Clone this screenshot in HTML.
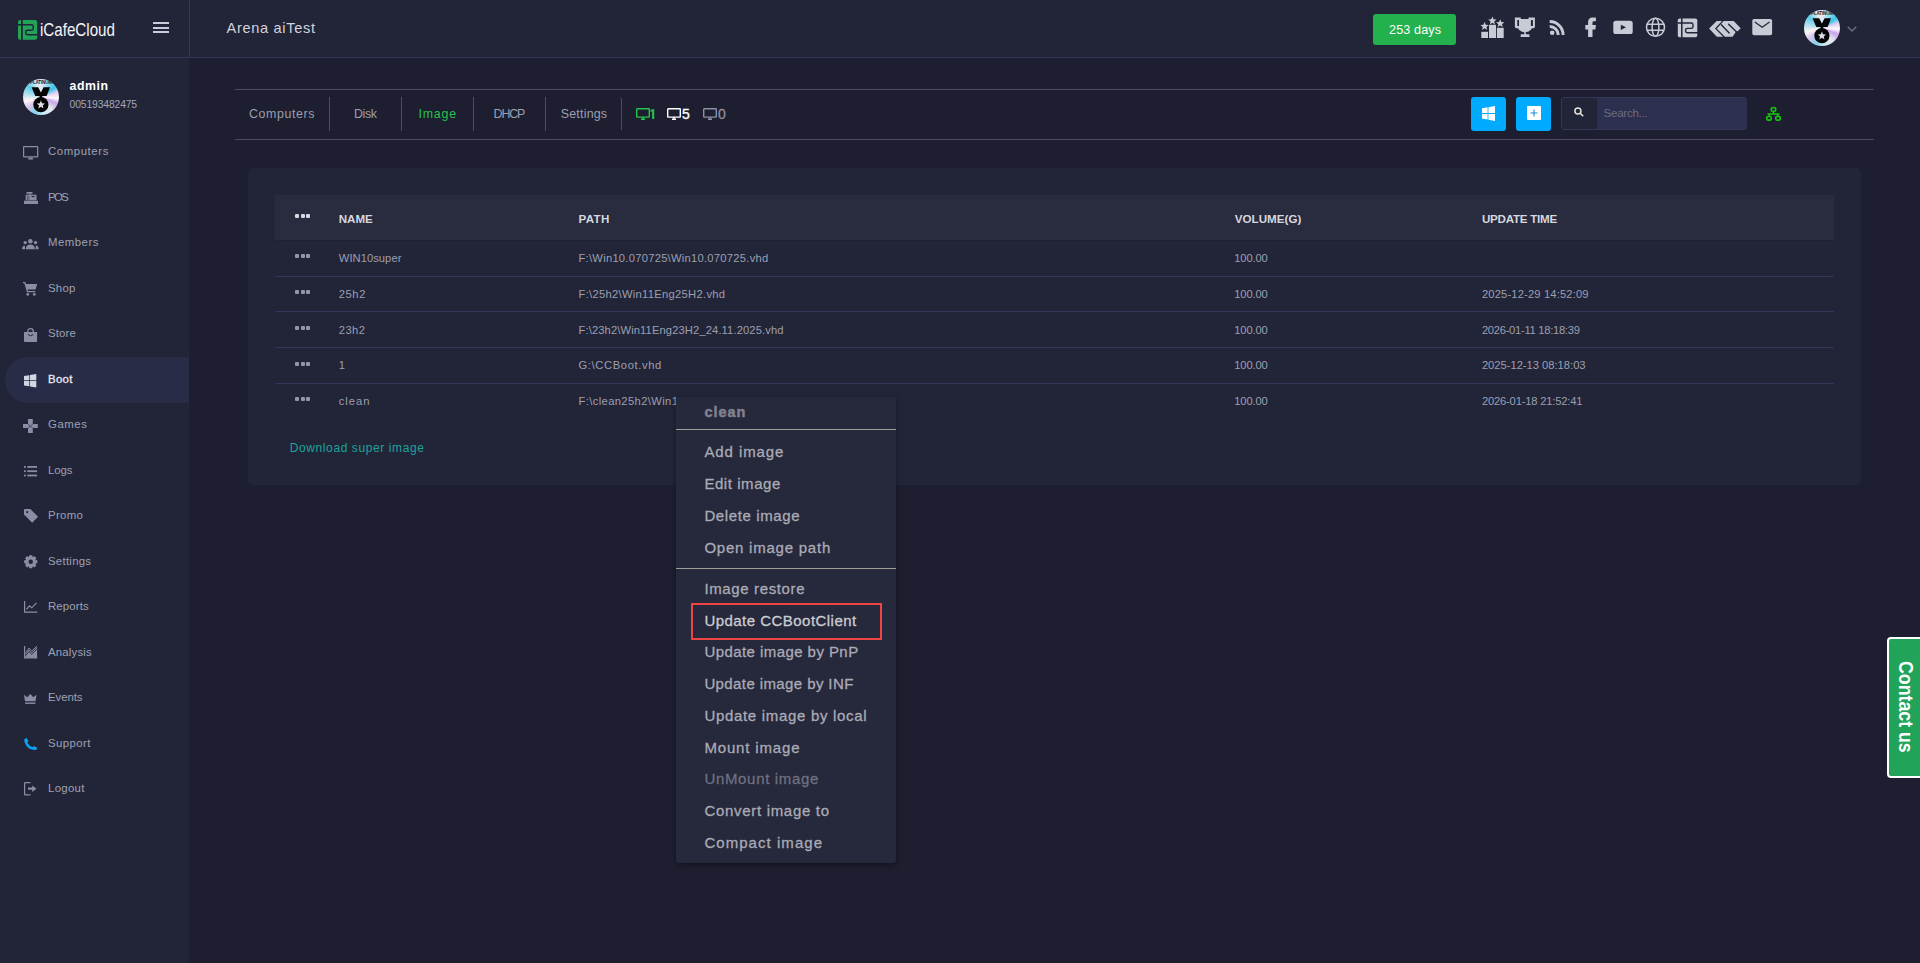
<!DOCTYPE html>
<html><head><meta charset="utf-8">
<style>
html,body{margin:0;padding:0;}
body{width:1920px;height:963px;overflow:hidden;background:#1d1e2f;font-family:"Liberation Sans",sans-serif;position:relative;}
.a{position:absolute;}
.t{position:absolute;white-space:nowrap;line-height:1;}
svg{position:absolute;overflow:visible;}
</style></head><body>
<!-- header -->
<div class="a" style="left:0;top:0;width:1920px;height:57px;background:#222538"></div>
<div class="a" style="left:0;top:57px;width:1920px;height:1px;background:#323459"></div>
<div class="a" style="left:189px;top:0;width:1px;height:57px;background:#323459"></div>
<!-- sidebar -->
<div class="a" style="left:0;top:58px;width:189px;height:905px;background:#222538"></div>
<div class="a" style="left:5px;top:357px;width:184px;height:46px;background:#292c47;border-radius:23px 0 0 23px"></div>

<!-- logo -->
<svg style="left:18px;top:20px" width="19" height="20" viewBox="0 0 19 20">
  <rect x="0" y="0" width="19.2" height="19.8" rx="2.2" fill="#21a358"/>
  <path d="M3.9 0V20" stroke="#222538" stroke-width="1.8"/>
  <path d="M0 4.7H13.6Q15.3 4.7 15.3 6.4V8.6Q15.3 10.3 13.6 10.3H9.4Q7.7 10.3 7.7 12V13.1Q7.7 14.8 9.4 14.8H19.5" stroke="#222538" stroke-width="1.5" fill="none"/>
</svg>
<!-- hamburger -->
<div class="a" style="left:153px;top:22px;width:16px;height:2px;background:#c9cbd6"></div>
<div class="a" style="left:153px;top:26.5px;width:16px;height:2px;background:#c9cbd6"></div>
<div class="a" style="left:153px;top:31px;width:16px;height:2px;background:#c9cbd6"></div>

<!-- days button -->
<div class="a" style="left:1373px;top:14px;width:83px;height:31px;background:#22b14c;border-radius:3px"></div>

<!-- header icons -->
<svg style="left:0;top:0" width="1920" height="57" viewBox="0 0 1920 57">
 <g fill="#c8cad6">
  <rect x="1481.3" y="31.8" width="6.7" height="6.2"/><rect x="1489" y="24.8" width="7" height="13.2"/><rect x="1496.9" y="27.8" width="6.8" height="10.2"/>
  <path d="M1484.60 22.10 L1485.74 24.83 L1488.69 25.07 L1486.44 27.00 L1487.13 29.88 L1484.60 28.33 L1482.07 29.88 L1482.76 27.00 L1480.51 25.07 L1483.46 24.83Z"/><path d="M1492.40 16.60 L1493.54 19.33 L1496.49 19.57 L1494.24 21.50 L1494.93 24.38 L1492.40 22.83 L1489.87 24.38 L1490.56 21.50 L1488.31 19.57 L1491.26 19.33Z"/><path d="M1500.20 19.30 L1501.34 22.03 L1504.29 22.27 L1502.04 24.20 L1502.73 27.08 L1500.20 25.54 L1497.67 27.08 L1498.36 24.20 L1496.11 22.27 L1499.06 22.03Z"/>
  <path d="M1514.9 17.6H1520.8V19H1528.5V17.6H1534.9V26.8Q1534.9 28.2 1533.5 28.2H1532Q1530.6 30.8 1528.2 31.8L1525.8 32.1V34.3H1529.3L1529.5 37.1H1520.6L1520.8 34.3H1524.2V32.1L1521.8 31.8Q1519.4 30.8 1518 28.2H1516.3Q1514.9 28.2 1514.9 26.8ZM1517.3 20V26H1519V20ZM1530.9 20V26H1532.9V20Z"/>
  <circle cx="1552.2" cy="32.8" r="2.3"/>
  <path d="M1549.7 20.1A14.9 14.9 0 0 1 1564.6 35H1561.6A11.9 11.9 0 0 0 1549.7 23.1Z"/>
  <path d="M1549.7 25A10 10 0 0 1 1559.7 35H1556.8A7.1 7.1 0 0 0 1549.7 27.9Z"/>
  <path d="M1588.1 37V29.6H1585.3V24.9H1588.1V22Q1588.1 17.5 1592.6 17.5H1595.9V21.3H1593.6Q1592.5 21.3 1592.5 22.4V24.9H1595.9L1595.4 29.6H1592.5V37Z"/>
  <rect x="1613.3" y="20.7" width="19.4" height="13.3" rx="2.6"/>
  <path d="M1620.8 24.8V29.9L1626 27.35Z" fill="#222538"/>
 </g>
 <g fill="none" stroke="#c8cad6" stroke-width="1.5">
  <circle cx="1655.5" cy="27.35" r="9"/>
  <ellipse cx="1655.5" cy="27.35" rx="3.4" ry="9"/>
  <path d="M1647 24.3H1664M1647 30.3H1664"/>
 </g>
 <g>
  <rect x="1677.8" y="18.5" width="19.5" height="18.8" rx="1.8" fill="#c8cad6"/>
  <path d="M1681.8 18V38" stroke="#222538" stroke-width="1.5"/>
  <path d="M1677.5 23H1691.3Q1693 23 1693 24.7V26.8Q1693 28.4 1691.3 28.4H1687.3Q1685.6 28.4 1685.6 30.1V31Q1685.6 32.7 1687.3 32.7H1698" stroke="#222538" stroke-width="1.4" fill="none"/>
 </g>
 <g transform="translate(1705 16)">
  <path d="M4.1 12.6L11.7 5H28.7L35.7 12.3L32.6 15.3H31.2L27.6 20.8H11.8Z" fill="#c8cad6"/>
  <path d="M18.2 4.6L10.9 12.6L19.4 21.2" stroke="#222538" stroke-width="1.3" fill="none"/>
  <path d="M16.3 8.7L24.2 16.9" stroke="#222538" stroke-width="1.4" stroke-linecap="round" fill="none"/>
  <path d="M23.6 8.2L31.6 16" stroke="#222538" stroke-width="1.4" stroke-linecap="round" fill="none"/>
 </g>
 <rect x="1752.3" y="19" width="19.8" height="16.2" rx="1.8" fill="#c8cad6"/>
 <path d="M1754.8 22.1L1762.2 27.2L1769.6 22.1" stroke="#222538" stroke-width="1.2" fill="none"/>
</svg>
<!-- avatar header -->
<div class="a" style="left:1804.3px;top:9.9px;width:36px;height:36px;border-radius:50%;overflow:hidden;background:conic-gradient(from 0deg,#e8eaf2 0deg,#8fdcf0 30deg,#35c5ea 55deg,#e7d3f0 75deg,#fdf8ff 95deg,#c7a4ea 112deg,#e5e9f0 140deg,#cfe9f3 170deg,#7fd6ee 200deg,#d8c4ec 230deg,#fff6f4 255deg,#b7e2ee 280deg,#5fcde9 310deg,#dfe8f0 340deg,#e8eaf2 360deg)">
  <svg style="left:0;top:0" width="36" height="36" viewBox="0 0 36 36">
    <text x="18" y="5.2" font-size="4.6" font-weight="700" text-anchor="middle" fill="#1a1a1a" font-family="Liberation Sans" letter-spacing="-0.2">PLATINUM</text>
    <path d="M8.6 8.2H15.2L17.9 13.6L20.6 8.2H27.1L23.6 17H12.3Z" fill="#050505"/>
    <rect x="16.6" y="16.5" width="2.6" height="2.5" fill="#050505"/>
    <circle cx="17.9" cy="25.7" r="7.6" fill="#050505"/>
    <path d="M17.90 21.60 L19.04 24.33 L21.99 24.57 L19.74 26.50 L20.43 29.38 L17.90 27.83 L15.37 29.38 L16.06 26.50 L13.81 24.57 L16.76 24.33Z" fill="#dcdde6"/>
  </svg>
</div>
<svg style="left:1847px;top:25.5px" width="10" height="6" viewBox="0 0 10 6"><path d="M0.7 0.7L5 5L9.3 0.7" stroke="#6e7086" stroke-width="1.3" fill="none"/></svg>

<!-- sidebar avatar -->
<div class="a" style="left:23px;top:79px;width:36px;height:36px;border-radius:50%;overflow:hidden;background:conic-gradient(from 0deg,#e8eaf2 0deg,#8fdcf0 30deg,#35c5ea 55deg,#e7d3f0 75deg,#fdf8ff 95deg,#c7a4ea 112deg,#e5e9f0 140deg,#cfe9f3 170deg,#7fd6ee 200deg,#d8c4ec 230deg,#fff6f4 255deg,#b7e2ee 280deg,#5fcde9 310deg,#dfe8f0 340deg,#e8eaf2 360deg)">
  <svg style="left:0;top:0" width="36" height="36" viewBox="0 0 36 36">
    <text x="18" y="5.2" font-size="4.6" font-weight="700" text-anchor="middle" fill="#1a1a1a" font-family="Liberation Sans" letter-spacing="-0.2">PLATINUM</text>
    <path d="M8.6 8.2H15.2L17.9 13.6L20.6 8.2H27.1L23.6 17H12.3Z" fill="#050505"/>
    <rect x="16.6" y="16.5" width="2.6" height="2.5" fill="#050505"/>
    <circle cx="17.9" cy="25.7" r="7.6" fill="#050505"/>
    <path d="M17.90 21.60 L19.04 24.33 L21.99 24.57 L19.74 26.50 L20.43 29.38 L17.90 27.83 L15.37 29.38 L16.06 26.50 L13.81 24.57 L16.76 24.33Z" fill="#dcdde6"/>
  </svg>
</div>

<!-- sidebar icons -->
<g></g>
<svg style="left:22.9px;top:146.2px" width="15.300000000000004" height="13.400000000000006" viewBox="0 0 15.3 13.4" preserveAspectRatio="none" ><rect x="0.6" y="0.6" width="14.1" height="10.3" rx="0.5" fill="none" stroke="#8a8ea4" stroke-width="1.2"/><path d="M4.8 13.4H10.5L9.2 11.5H6.1Z" fill="#8a8ea4"/></svg>
<svg style="left:23.5px;top:192px" width="14.0" height="12" viewBox="0 0 14 12" preserveAspectRatio="none" ><rect x="2.5" y="0" width="6" height="1.7" fill="#8a8ea4"/><rect x="5.2" y="1.7" width="1.5" height="1.1" fill="#8a8ea4"/><rect x="1.7" y="2.7" width="10.8" height="5.6" fill="#8a8ea4"/><rect x="3" y="3.8" width="0.7" height="4.2" fill="#222538" opacity="0.7"/><rect x="4.6" y="3.8" width="0.7" height="4.2" fill="#222538" opacity="0.7"/><rect x="7.6" y="4" width="3" height="1.1" fill="#222538"/><rect x="0" y="8.7" width="14" height="3.3" fill="#8a8ea4"/></svg>
<svg style="left:22.2px;top:239.4px" width="16.7" height="10.199999999999989" viewBox="0 0 16.7 10.2" preserveAspectRatio="none" ><circle cx="8.35" cy="2.3" r="2.3" fill="#8a8ea4"/><path d="M3.8 10.2Q3.8 5.5 8.35 5.5Q12.9 5.5 12.9 10.2Z" fill="#8a8ea4"/><circle cx="3.2" cy="3.6" r="1.7" fill="#8a8ea4"/><circle cx="13.5" cy="3.6" r="1.7" fill="#8a8ea4"/><path d="M0 10.2Q0 6.5 2.8 6.4L3.2 10.2Z" fill="#8a8ea4"/><path d="M16.7 10.2Q16.7 6.5 13.9 6.4L13.5 10.2Z" fill="#8a8ea4"/></svg>
<svg style="left:22.9px;top:282px" width="14.200000000000003" height="13.800000000000011" viewBox="0 0 14.2 13.8" preserveAspectRatio="none" ><path d="M0 0.6H1.8L4.5 9.6H12.3" fill="none" stroke="#8a8ea4" stroke-width="1.3"/><path d="M2.3 2H14.2L12.6 7.6H4Z" fill="#8a8ea4"/><circle cx="4.8" cy="12.3" r="1.4" fill="#8a8ea4"/><circle cx="11.3" cy="12.3" r="1.4" fill="#8a8ea4"/></svg>
<svg style="left:24px;top:327.5px" width="13.100000000000001" height="14.100000000000023" viewBox="0 0 13.1 14.1" preserveAspectRatio="none" ><path d="M0 4H13.1V13Q13.1 14.1 12 14.1H1.1Q0 14.1 0 13Z" fill="#8a8ea4"/><path d="M3.8 5.5V3.3Q3.8 0.7 6.55 0.7Q9.3 0.7 9.3 3.3V5.5" fill="none" stroke="#8a8ea4" stroke-width="1.3"/><path d="M3.8 6.5Q6.55 9 9.3 6.5" fill="none" stroke="#222538" stroke-width="1"/></svg>
<svg style="left:24px;top:373.5px" width="12.299999999999997" height="13.5" viewBox="0 0 12.3 13.5" preserveAspectRatio="none" ><path d="M0 2.1L5.3 1.2V6.3H0ZM6 1.1L12.3 0V6.3H6ZM0 7.1H5.3V12.3L0 11.4ZM6 7.1H12.3V13.5L6 12.4Z" fill="#d2d5e2"/></svg>
<svg style="left:23.2px;top:418.9px" width="14.8" height="14.100000000000023" viewBox="0 0 14.8 14.1" preserveAspectRatio="none" ><path d="M5 0H9.8V4.6L7.4 6.9L5 4.6Z" fill="#8a8ea4"/><path d="M5 14.1H9.8V9.5L7.4 7.2L5 9.5Z" fill="#8a8ea4"/><path d="M0 5.1V9.1H4.9L6.9 7.1L4.9 5.1Z" fill="#8a8ea4"/><path d="M14.8 5.1V9.1H9.9L7.9 7.1L9.9 5.1Z" fill="#8a8ea4"/></svg>
<svg style="left:24px;top:465.7px" width="13.100000000000001" height="10.400000000000034" viewBox="0 0 13.1 10.4" preserveAspectRatio="none" ><rect x="0" y="0" width="1.8" height="1.8" fill="#8a8ea4"/><rect x="3.3" y="0" width="9.8" height="1.8" fill="#8a8ea4"/><rect x="0" y="4.3" width="1.8" height="1.8" fill="#8a8ea4"/><rect x="3.3" y="4.3" width="9.8" height="1.8" fill="#8a8ea4"/><rect x="0" y="8.6" width="1.8" height="1.8" fill="#8a8ea4"/><rect x="3.3" y="8.6" width="9.8" height="1.8" fill="#8a8ea4"/></svg>
<svg style="left:23.5px;top:509.1px" width="14.100000000000001" height="13.699999999999932" viewBox="0 0 14.1 13.7" preserveAspectRatio="none" ><path d="M0 1Q0 0 1 0H6.3L14.1 7.8L8.2 13.7L0 5.6Z" fill="#8a8ea4"/><circle cx="3.2" cy="3.1" r="1.1" fill="#222538"/></svg>
<svg style="left:23.8px;top:555.1px" width="13.499999999999996" height="13.5" viewBox="0 0 13.5 13.5" preserveAspectRatio="none" ><path d="M5.23 0.17 L8.27 0.17 L8.59 2.21 L8.66 2.24 L10.33 1.03 L12.47 3.17 L11.26 4.84 L11.29 4.91 L13.33 5.23 L13.33 8.27 L11.29 8.59 L11.26 8.66 L12.47 10.33 L10.33 12.47 L8.66 11.26 L8.59 11.29 L8.27 13.33 L5.23 13.33 L4.91 11.29 L4.84 11.26 L3.17 12.47 L1.03 10.33 L2.24 8.66 L2.21 8.59 L0.17 8.27 L0.17 5.23 L2.21 4.91 L2.24 4.84 L1.03 3.17 L3.17 1.03 L4.84 2.24 L4.91 2.21Z" fill="#8a8ea4"/><circle cx="6.75" cy="6.75" r="4.9" fill="#8a8ea4"/><circle cx="6.75" cy="6.75" r="2.2" fill="#222538"/></svg>
<svg style="left:23.8px;top:601.3px" width="13.3" height="11.700000000000045" viewBox="0 0 13.3 11.7" preserveAspectRatio="none" ><path d="M0.6 0V11.1H13.3" fill="none" stroke="#8a8ea4" stroke-width="1.2"/><path d="M2.5 8.5L5.5 4.8L7.8 6.8L12.5 1.8" fill="none" stroke="#8a8ea4" stroke-width="1.2"/></svg>
<svg style="left:23.8px;top:646.2px" width="13.3" height="12.399999999999977" viewBox="0 0 13.3 12.4" preserveAspectRatio="none" ><path d="M0.6 0V11.8H13.3" fill="none" stroke="#8a8ea4" stroke-width="1.2"/><path d="M1.5 11.8V8L5 3.5L7.8 6.5L13.1 1V11.8Z" fill="#8a8ea4"/><path d="M1.8 6.8L5 2L7.8 5L13.1 0" fill="none" stroke="#8a8ea4" stroke-width="1"/><path d="M1.5 9.8L5 5.5L7.8 8.3L13.1 3" fill="none" stroke="#222538" stroke-width="0.9"/></svg>
<svg style="left:24.1px;top:693.5px" width="12.5" height="9.899999999999977" viewBox="0 0 12.5 9.9" preserveAspectRatio="none" ><path d="M0 0.8L3.2 3.3L6.25 0L9.3 3.3L12.5 0.8L11.5 7.2H1Z" fill="#8a8ea4"/><rect x="1" y="8.5" width="10.5" height="1.4" fill="#8a8ea4"/></svg>
<svg style="left:23.7px;top:737.9px" width="13.2" height="12.100000000000023" viewBox="0 0 13.2 12.1" preserveAspectRatio="none" ><path d="M0.3 1.2L2.6 0L4.5 3.3L3.2 4.5Q5.2 8.3 8.7 9.3L9.9 8L13.2 9.8L12 12.1Q5.5 12.1 2.2 7.5Q0 4.5 0.3 1.2Z" fill="#0aa5f5"/></svg>
<svg style="left:24.1px;top:782.2px" width="12.5" height="13.399999999999977" viewBox="0 0 12.5 13.4" preserveAspectRatio="none" ><path d="M6.5 0.6H1.2Q0.6 0.6 0.6 1.2V12.2Q0.6 12.8 1.2 12.8H6.5" fill="none" stroke="#8a8ea4" stroke-width="1.2"/><path d="M4 5.6H8.2V3.5L12.5 6.7L8.2 9.9V7.8H4Z" fill="#8a8ea4"/></svg>

<!-- tab bar -->
<div class="a" style="left:235px;top:89px;width:1639px;height:1px;background:#4a4b5e"></div>
<div class="a" style="left:235px;top:139px;width:1639px;height:1px;background:#4a4b5e"></div>
<div class="a" style="left:329px;top:97px;width:1px;height:34px;background:#4a4b5e"></div>
<div class="a" style="left:401px;top:97px;width:1px;height:34px;background:#4a4b5e"></div>
<div class="a" style="left:473px;top:97px;width:1px;height:34px;background:#4a4b5e"></div>
<div class="a" style="left:545px;top:97px;width:1px;height:34px;background:#4a4b5e"></div>
<div class="a" style="left:612px;top:97px;width:10px;height:33px;border-right:1px solid #4a4b5e;border-top-right-radius:3px;box-sizing:border-box"></div>
<!-- monitors -->
<svg style="left:636px;top:108px" width="14" height="12" viewBox="0 0 14 12" fill="none" stroke="#27c24c" stroke-width="1.4"><rect x="0.7" y="0.7" width="12.6" height="8.4" rx="0.6"/><path d="M5 11.3H9M7 9V11.3" /></svg>
<svg style="left:667px;top:108px" width="14" height="12" viewBox="0 0 14 12" fill="none" stroke="#ffffff" stroke-width="1.4"><rect x="0.7" y="0.7" width="12.6" height="8.4" rx="0.6"/><path d="M5 11.3H9M7 9V11.3" /></svg>
<svg style="left:703px;top:108px" width="14" height="12" viewBox="0 0 14 12" fill="none" stroke="#8e90a2" stroke-width="1.4"><rect x="0.7" y="0.7" width="12.6" height="8.4" rx="0.6"/><path d="M5 11.3H9M7 9V11.3" /></svg>

<!-- buttons -->
<div class="a" style="left:1471px;top:97px;width:35px;height:34px;background:#00aaff;border-radius:3px"></div>
<svg style="left:1482px;top:106px" width="13" height="15" viewBox="0 0 13 15" fill="#fff"><path d="M0 2.3L5.6 1.3V7H0ZM6.4 1.2L13 0V7H6.4ZM0 7.9H5.6V13.6L0 12.6ZM6.4 7.9H13V15L6.4 13.8Z"/></svg>
<div class="a" style="left:1516px;top:97px;width:35px;height:34px;background:#00aaff;border-radius:3px"></div>
<svg style="left:1527px;top:106px" width="14" height="14" viewBox="0 0 14 14"><rect x="0" y="0" width="14" height="14" rx="1" fill="#fff"/><path d="M7 3.5V10.5M3.5 7H10.5" stroke="#1a8fd8" stroke-width="1.1"/></svg>
<!-- search -->
<div class="a" style="left:1561px;top:97px;width:186px;height:33px;background:#222437;border:1px solid #34365a;border-radius:3px;box-sizing:border-box"></div>
<div class="a" style="left:1597px;top:98px;width:149px;height:31px;background:#2d2f4f;border-left:1px solid #2c2e4a"></div>
<svg style="left:1574px;top:107px" width="10" height="10" viewBox="0 0 10 10" fill="none" stroke="#e6e3d8" stroke-width="1.5"><circle cx="3.9" cy="3.9" r="3"/><path d="M6.1 6.1L9.2 9.2"/></svg>
<!-- network -->
<svg style="left:1766px;top:107px" width="15" height="14" viewBox="0 0 15 14" fill="none" stroke="#16c60c" stroke-width="1.6"><rect x="5.3" y="0.8" width="4.4" height="3.4" rx="1"/><path d="M7.5 4.2V7M1.5 7H13.5M3.3 7V9.3M11.7 7V9.3"/><rect x="0.8" y="9.5" width="4.4" height="3.6" rx="1"/><rect x="9.8" y="9.5" width="4.4" height="3.6" rx="1"/></svg>

<!-- card -->
<div class="a" style="left:248px;top:168px;width:1613px;height:317px;background:#222538;border-radius:5px"></div>
<div class="a" style="left:275px;top:195px;width:1559px;height:45px;background:#292b3f"></div>
<div class="a" style="left:275px;top:240px;width:1559px;height:1px;background:#1f2032"></div>
<div class="a" style="left:275px;top:276px;width:1559px;height:1px;background:#32345a"></div>
<div class="a" style="left:275px;top:311px;width:1559px;height:1px;background:#32345a"></div>
<div class="a" style="left:275px;top:347px;width:1559px;height:1px;background:#32345a"></div>
<div class="a" style="left:275px;top:383px;width:1559px;height:1px;background:#32345a"></div>
<div class="a" style="left:295.0px;top:254.3px;width:4px;height:4px;background:#9496a8;border-radius:1px"></div>
<div class="a" style="left:300.5px;top:254.3px;width:4px;height:4px;background:#9496a8;border-radius:1px"></div>
<div class="a" style="left:306.0px;top:254.3px;width:4px;height:4px;background:#9496a8;border-radius:1px"></div>
<div class="a" style="left:295.0px;top:290.1px;width:4px;height:4px;background:#9496a8;border-radius:1px"></div>
<div class="a" style="left:300.5px;top:290.1px;width:4px;height:4px;background:#9496a8;border-radius:1px"></div>
<div class="a" style="left:306.0px;top:290.1px;width:4px;height:4px;background:#9496a8;border-radius:1px"></div>
<div class="a" style="left:295.0px;top:325.8px;width:4px;height:4px;background:#9496a8;border-radius:1px"></div>
<div class="a" style="left:300.5px;top:325.8px;width:4px;height:4px;background:#9496a8;border-radius:1px"></div>
<div class="a" style="left:306.0px;top:325.8px;width:4px;height:4px;background:#9496a8;border-radius:1px"></div>
<div class="a" style="left:295.0px;top:361.6px;width:4px;height:4px;background:#9496a8;border-radius:1px"></div>
<div class="a" style="left:300.5px;top:361.6px;width:4px;height:4px;background:#9496a8;border-radius:1px"></div>
<div class="a" style="left:306.0px;top:361.6px;width:4px;height:4px;background:#9496a8;border-radius:1px"></div>
<div class="a" style="left:295.0px;top:397.3px;width:4px;height:4px;background:#9496a8;border-radius:1px"></div>
<div class="a" style="left:300.5px;top:397.3px;width:4px;height:4px;background:#9496a8;border-radius:1px"></div>
<div class="a" style="left:306.0px;top:397.3px;width:4px;height:4px;background:#9496a8;border-radius:1px"></div>
<div class="a" style="left:295.0px;top:214px;width:4px;height:4px;background:#d6d7df;border-radius:1px"></div>
<div class="a" style="left:300.5px;top:214px;width:4px;height:4px;background:#d6d7df;border-radius:1px"></div>
<div class="a" style="left:306.0px;top:214px;width:4px;height:4px;background:#d6d7df;border-radius:1px"></div>

<div class="t" style="left:226.60px;top:20.74px;font-size:14.6px;color:#d2d3dc;font-weight:400;letter-spacing:0.664px;">Arena aiTest</div>
<div class="t" style="left:1389.00px;top:23.83px;font-size:12.6px;color:#ffffff;font-weight:400;letter-spacing:0.129px;">253 days</div>
<div class="t" style="left:40px;top:21.19px;font-size:18.2px;color:#f4f4f6;transform:scaleX(0.833);transform-origin:0 0">iCafeCloud</div>
<div class="t" style="left:69.60px;top:80.39px;font-size:12.3px;color:#ffffff;font-weight:700;letter-spacing:0.575px;">admin</div>
<div class="t" style="left:69.60px;top:100.20px;font-size:10.4px;color:#a3a5b7;font-weight:400;letter-spacing:-0.164px;">005193482475</div>
<div class="t" style="left:48.00px;top:146.25px;font-size:11.4px;color:#9ea1b3;font-weight:400;letter-spacing:0.581px;">Computers</div>
<div class="t" style="left:48.00px;top:191.75px;font-size:11.4px;color:#9ea1b3;font-weight:400;letter-spacing:-1.569px;">POS</div>
<div class="t" style="left:48.00px;top:237.25px;font-size:11.4px;color:#9ea1b3;font-weight:400;letter-spacing:0.485px;">Members</div>
<div class="t" style="left:48.00px;top:282.75px;font-size:11.4px;color:#9ea1b3;font-weight:400;letter-spacing:0.233px;">Shop</div>
<div class="t" style="left:48.00px;top:328.25px;font-size:11.4px;color:#9ea1b3;font-weight:400;letter-spacing:0.122px;">Store</div>
<div class="t" style="left:48.00px;top:373.75px;font-size:11.4px;color:#e9eaf0;font-weight:400;letter-spacing:0.324px;-webkit-text-stroke:0.3px #e9eaf0;">Boot</div>
<div class="t" style="left:48.00px;top:419.25px;font-size:11.4px;color:#9ea1b3;font-weight:400;letter-spacing:0.551px;">Games</div>
<div class="t" style="left:48.00px;top:464.75px;font-size:11.4px;color:#9ea1b3;font-weight:400;letter-spacing:-0.108px;">Logs</div>
<div class="t" style="left:48.00px;top:510.25px;font-size:11.4px;color:#9ea1b3;font-weight:400;letter-spacing:0.351px;">Promo</div>
<div class="t" style="left:48.00px;top:555.75px;font-size:11.4px;color:#9ea1b3;font-weight:400;letter-spacing:0.271px;">Settings</div>
<div class="t" style="left:48.00px;top:601.25px;font-size:11.4px;color:#9ea1b3;font-weight:400;letter-spacing:0.142px;">Reports</div>
<div class="t" style="left:48.00px;top:646.75px;font-size:11.4px;color:#9ea1b3;font-weight:400;letter-spacing:0.196px;">Analysis</div>
<div class="t" style="left:48.00px;top:692.25px;font-size:11.4px;color:#9ea1b3;font-weight:400;letter-spacing:-0.077px;">Events</div>
<div class="t" style="left:48.00px;top:737.75px;font-size:11.4px;color:#9ea1b3;font-weight:400;letter-spacing:0.419px;">Support</div>
<div class="t" style="left:48.00px;top:783.25px;font-size:11.4px;color:#9ea1b3;font-weight:400;letter-spacing:0.294px;">Logout</div>
<div class="t" style="left:248.90px;top:107.70px;font-size:12.4px;color:#9c9eaf;font-weight:400;letter-spacing:0.612px;">Computers</div>
<div class="t" style="left:354.00px;top:107.70px;font-size:12.4px;color:#9c9eaf;font-weight:400;letter-spacing:-0.367px;">Disk</div>
<div class="t" style="left:418.50px;top:107.70px;font-size:12.4px;color:#27c24c;font-weight:400;letter-spacing:0.800px;">Image</div>
<div class="t" style="left:493.60px;top:107.70px;font-size:12.4px;color:#9c9eaf;font-weight:400;letter-spacing:-1.133px;">DHCP</div>
<div class="t" style="left:560.70px;top:107.70px;font-size:12.4px;color:#9c9eaf;font-weight:400;letter-spacing:0.229px;">Settings</div>
<svg style="left:0;top:0" width="1" height="1"><path d="M652.1 109.2H654.2V119H652.1V111.2L650.5 112V110.3Z" fill="#27c24c"/></svg>
<div class="t" style="left:682.10px;top:107.25px;font-size:14px;color:#ffffff;font-weight:400;letter-spacing:0.000px;-webkit-text-stroke:0.35px #fff;">5</div>
<div class="t" style="left:718.00px;top:107.25px;font-size:14px;color:#8e90a2;font-weight:400;letter-spacing:0.000px;-webkit-text-stroke:0.3px #8e90a2;">0</div>
<div class="t" style="left:1603.60px;top:106.88px;font-size:11.6px;color:#6b6c7f;font-weight:400;letter-spacing:-0.300px;">Search...</div>
<div class="t" style="left:338.80px;top:213.38px;font-size:11.6px;color:#d6d7df;font-weight:700;letter-spacing:-0.067px;">NAME</div>
<div class="t" style="left:578.50px;top:213.38px;font-size:11.6px;color:#d6d7df;font-weight:700;letter-spacing:0.367px;">PATH</div>
<div class="t" style="left:1234.70px;top:213.38px;font-size:11.6px;color:#d6d7df;font-weight:700;letter-spacing:0.037px;">VOLUME(G)</div>
<div class="t" style="left:1481.90px;top:213.38px;font-size:11.6px;color:#d6d7df;font-weight:700;letter-spacing:-0.240px;">UPDATE TIME</div>
<div class="t" style="left:338.80px;top:253.12px;font-size:11.2px;color:#9d9fb0;font-weight:400;letter-spacing:0.044px;">WIN10super</div>
<div class="t" style="left:578.50px;top:253.12px;font-size:11.2px;color:#9d9fb0;font-weight:400;letter-spacing:0.261px;">F:\Win10.070725\Win10.070725.vhd</div>
<div class="t" style="left:1234.30px;top:253.12px;font-size:11.2px;color:#9d9fb0;font-weight:400;letter-spacing:-0.160px;">100.00</div>
<div class="t" style="left:338.80px;top:288.87px;font-size:11.2px;color:#9d9fb0;font-weight:400;letter-spacing:0.567px;">25h2</div>
<div class="t" style="left:578.50px;top:288.87px;font-size:11.2px;color:#9d9fb0;font-weight:400;letter-spacing:0.296px;">F:\25h2\Win11Eng25H2.vhd</div>
<div class="t" style="left:1234.30px;top:288.87px;font-size:11.2px;color:#9d9fb0;font-weight:400;letter-spacing:-0.160px;">100.00</div>
<div class="t" style="left:1481.90px;top:288.87px;font-size:11.2px;color:#9d9fb0;font-weight:400;letter-spacing:0.156px;">2025-12-29 14:52:09</div>
<div class="t" style="left:338.80px;top:324.62px;font-size:11.2px;color:#9d9fb0;font-weight:400;letter-spacing:0.433px;">23h2</div>
<div class="t" style="left:578.50px;top:324.62px;font-size:11.2px;color:#9d9fb0;font-weight:400;letter-spacing:0.115px;">F:\23h2\Win11Eng23H2_24.11.2025.vhd</div>
<div class="t" style="left:1234.30px;top:324.62px;font-size:11.2px;color:#9d9fb0;font-weight:400;letter-spacing:-0.160px;">100.00</div>
<div class="t" style="left:1481.90px;top:324.62px;font-size:11.2px;color:#9d9fb0;font-weight:400;letter-spacing:-0.283px;">2026-01-11 18:18:39</div>
<div class="t" style="left:338.80px;top:360.37px;font-size:11.2px;color:#9d9fb0;font-weight:400;letter-spacing:0.000px;">1</div>
<div class="t" style="left:578.50px;top:360.37px;font-size:11.2px;color:#9d9fb0;font-weight:400;letter-spacing:0.633px;">G:\CCBoot.vhd</div>
<div class="t" style="left:1234.30px;top:360.37px;font-size:11.2px;color:#9d9fb0;font-weight:400;letter-spacing:-0.160px;">100.00</div>
<div class="t" style="left:1481.90px;top:360.37px;font-size:11.2px;color:#9d9fb0;font-weight:400;letter-spacing:-0.011px;">2025-12-13 08:18:03</div>
<div class="t" style="left:338.80px;top:396.12px;font-size:11.2px;color:#9d9fb0;font-weight:400;letter-spacing:0.975px;">clean</div>
<div class="t" style="left:578.50px;top:396.12px;font-size:11.2px;color:#9d9fb0;font-weight:400;letter-spacing:0.382px;width:97.5px;overflow:hidden;">F:\clean25h2\Win11Eng25H2.vhd</div>
<div class="t" style="left:1234.30px;top:396.12px;font-size:11.2px;color:#9d9fb0;font-weight:400;letter-spacing:-0.160px;">100.00</div>
<div class="t" style="left:1481.90px;top:396.12px;font-size:11.2px;color:#9d9fb0;font-weight:400;letter-spacing:-0.183px;">2026-01-18 21:52:41</div>
<div class="t" style="left:289.80px;top:441.84px;font-size:12px;color:#1ba39c;font-weight:400;letter-spacing:0.595px;">Download super image</div>

<!-- context menu -->
<div class="a" style="left:676px;top:397px;width:220px;height:466px;background:#26283b;border-radius:3px;box-shadow:0 2px 6px rgba(0,0,0,0.35)"></div>
<div class="a" style="left:676px;top:429px;width:220px;height:1px;background:#9e9d98"></div>
<div class="a" style="left:676px;top:568px;width:220px;height:1px;background:#9e9d98"></div>
<div class="a" style="left:691px;top:603px;width:191px;height:37px;border:2px solid #ee4444;box-sizing:border-box"></div>
<div class="t" style="left:704.50px;top:404.73px;font-size:14.5px;color:#80818f;font-weight:700;letter-spacing:0.975px;-webkit-text-stroke:0.5px #80818f;">clean</div>
<div class="t" style="left:704.40px;top:444.20px;font-size:15px;color:#aaabb6;font-weight:400;letter-spacing:0.910px;-webkit-text-stroke:0.3px #aaabb6;">Add image</div>
<div class="t" style="left:704.40px;top:476.07px;font-size:15px;color:#aaabb6;font-weight:400;letter-spacing:0.561px;-webkit-text-stroke:0.3px #aaabb6;">Edit image</div>
<div class="t" style="left:704.40px;top:507.94px;font-size:15px;color:#aaabb6;font-weight:400;letter-spacing:0.613px;-webkit-text-stroke:0.3px #aaabb6;">Delete image</div>
<div class="t" style="left:704.40px;top:539.81px;font-size:15px;color:#aaabb6;font-weight:400;letter-spacing:0.768px;-webkit-text-stroke:0.3px #aaabb6;">Open image path</div>
<div class="t" style="left:704.40px;top:580.90px;font-size:15px;color:#aaabb6;font-weight:400;letter-spacing:0.633px;-webkit-text-stroke:0.3px #aaabb6;">Image restore</div>
<div class="t" style="left:704.40px;top:612.66px;font-size:15px;color:#cbccd2;font-weight:400;letter-spacing:0.467px;-webkit-text-stroke:0.3px #cbccd2;">Update CCBootClient</div>
<div class="t" style="left:704.40px;top:644.42px;font-size:15px;color:#aaabb6;font-weight:400;letter-spacing:0.435px;-webkit-text-stroke:0.3px #aaabb6;">Update image by PnP</div>
<div class="t" style="left:704.40px;top:676.18px;font-size:15px;color:#aaabb6;font-weight:400;letter-spacing:0.399px;-webkit-text-stroke:0.3px #aaabb6;">Update image by INF</div>
<div class="t" style="left:704.40px;top:707.94px;font-size:15px;color:#aaabb6;font-weight:400;letter-spacing:0.690px;-webkit-text-stroke:0.3px #aaabb6;">Update image by local</div>
<div class="t" style="left:704.40px;top:739.70px;font-size:15px;color:#aaabb6;font-weight:400;letter-spacing:0.844px;-webkit-text-stroke:0.3px #aaabb6;">Mount image</div>
<div class="t" style="left:704.40px;top:771.46px;font-size:15px;color:#6f7081;font-weight:400;letter-spacing:0.677px;-webkit-text-stroke:0.3px #6f7081;">UnMount image</div>
<div class="t" style="left:704.40px;top:803.22px;font-size:15px;color:#aaabb6;font-weight:400;letter-spacing:0.696px;-webkit-text-stroke:0.3px #aaabb6;">Convert image to</div>
<div class="t" style="left:704.40px;top:834.98px;font-size:15px;color:#aaabb6;font-weight:400;letter-spacing:1.047px;-webkit-text-stroke:0.3px #aaabb6;">Compact image</div>

<!-- contact us -->
<div class="a" style="left:1886.5px;top:636.5px;width:40px;height:141px;background:#21a35a;border:2.5px solid #fff;border-radius:4px;box-sizing:border-box"></div>
<div class="t" style="left:1914.89px;top:660.8px;font-size:19.5px;font-weight:700;color:#fff;transform-origin:0 0;transform:rotate(90deg) scaleX(0.91)">Contact us</div>
</body></html>
